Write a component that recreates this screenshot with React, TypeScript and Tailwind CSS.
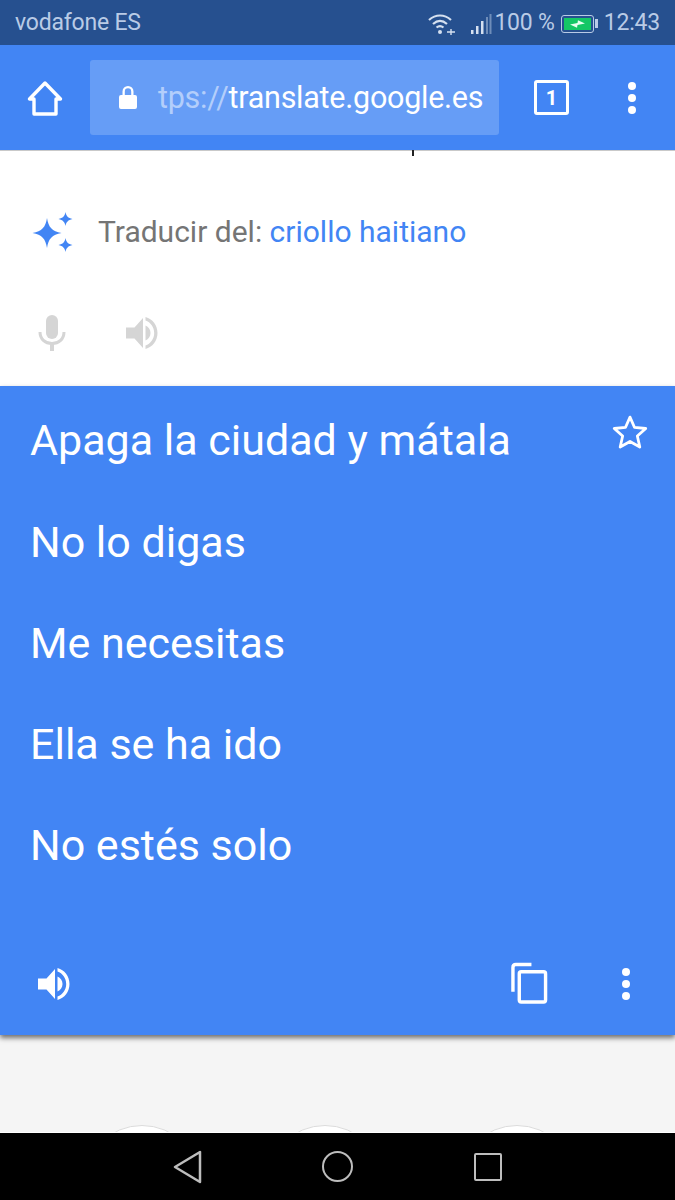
const Speaker = ({ className }: { className: string }) => (
  <svg viewBox="0 0 36 36" className={className} fill="currentColor">
    <path d="M1 12.500h8.500L18 3v30l-8.500-9.500H1z" />
    <path d="M20.500 10.500c3 1.300 5 4.200 5 7.500s-2 6.200-5 7.500z" />
    <path d="M20.500 2c7 1.800 12 8.300 12 16s-5 14.200-12 16v-3.500c5-1.700 8.700-6.700 8.700-12.500S25.500 7.200 20.500 5.500z" />
  </svg>
);

const Dots = () => (
  <div className="flex flex-col items-center gap-[4px]">
    <div className="w-[8px] h-[8px] rounded-full bg-white" />
    <div className="w-[8px] h-[8px] rounded-full bg-white" />
    <div className="w-[8px] h-[8px] rounded-full bg-white" />
  </div>
);

const StatusBar = () => (
  <div className="h-[45px] bg-[#26508f] flex items-center pl-[15px] pr-[15px] pt-[2px] text-[#b9cbe6] text-[23px] tracking-[-0.2px]">
    <span>vodafone ES</span>
    <div className="ml-auto flex items-center">
      <svg viewBox="0 0 30 24" className="w-[30px] h-[24px] mr-[13px]" fill="none" stroke="#d5e0f0" strokeWidth="2.200">
        <path d="M2 8c6.500-6 15.500-6 22 0" />
        <path d="M6 12c4.500-4 9.500-4 14 0" />
        <path d="M9.500 15.500c2.500-2 4.500-2 7 0" />
        <circle cx="13" cy="20" r="2" fill="#d5e0f0" stroke="none" />
        <path d="M20 20h8M24 17v6" strokeWidth="1.400" />
      </svg>
      <svg viewBox="0 0 22 24" className="w-[22px] h-[24px] mr-[2px]" fill="#d5e0f0">
        <rect x="1" y="18" width="2.500" height="4" />
        <rect x="6" y="14" width="2.500" height="8" />
        <rect x="11" y="9" width="2.500" height="13" />
        <rect x="16" y="5" width="2" height="17" fill="#6f8db9" />
        <rect x="19.500" y="2" width="2" height="20" fill="#6f8db9" />
      </svg>
      <span className="mr-[6px]">100 %</span>
      <div className="w-[33px] h-[18px] rounded-[3px] border border-[#b9cbe6] p-[2px] flex">
        <div className="flex-1 bg-[#14c765] flex items-center justify-center">
          <svg viewBox="0 0 16 8" className="w-[15px] h-[8px]" fill="#e8fff0">
            <path d="M0 4.500 8 3l.5-3L16 3.500 8 5l-.5 3z" />
          </svg>
        </div>
      </div>
      <div className="w-[3px] h-[9px] bg-[#b9cbe6] mr-[6px] ml-[1px]" />
      <span>12:43</span>
    </div>
  </div>
);

const Toolbar = () => (
  <div className="h-[106px] bg-[#4285f4] flex items-center border-b border-[#c9c9c9] relative">
    <div className="w-[90px] flex justify-center px-[1px]">
      <svg viewBox="0 0 36 36" className="w-[36px] h-[36px]" fill="none" stroke="white" strokeWidth="3.400" strokeLinejoin="round">
        <path d="M18 3 2.500 19H7v15h22V19h4.500z" />
      </svg>
    </div>
    <div className="w-[409px] h-[75px] rounded-[3px] bg-[#669df6] flex items-center pl-[28px] text-[30.500px] tracking-[-0.26px] text-white overflow-hidden">
      <svg viewBox="0 0 20 26" className="w-[20px] h-[26px] mr-[20px] shrink-0" fill="white">
        <path d="M3 10h1.500V6.500a5.500 5.500 0 0 1 11 0V10H17a2 2 0 0 1 2 2v10a2 2 0 0 1-2 2H3a2 2 0 0 1-2-2V12a2 2 0 0 1 2-2zm3.800 0h6.400V6.500a3.200 3.200 0 0 0-6.400 0z" />
      </svg>
      <span className="text-[#b3cefb]">tps://</span>
      <span>translate.google.es</span>
    </div>
    <div className="w-[35px] h-[35px] ml-[35px] mr-[59px] rounded-[3px] border-[3.500px] border-white flex items-center justify-center text-white text-[20px] font-bold">
      1
    </div>
    <Dots />
    <div className="absolute left-[412px] top-[105px] w-[2px] h-[6px] bg-[#222]" />
  </div>
);

const phrases = ["Apaga la ciudad y mátala", "No lo digas", "Me necesitas", "Ella se ha ido", "No estés solo"];

const App = () => {
  return (
    <div className="w-[675px] h-[1200px] flex flex-col bg-[#f5f5f5] overflow-hidden font-['Roboto',sans-serif]">
      <StatusBar />
      <Toolbar />
      <div className="h-[235px] bg-white pl-[31px] pt-[60px]">
        <div className="flex items-center h-[44px]">
          <svg viewBox="0 0 44 44" className="w-[44px] h-[44px] ml-[1px]" fill="#4285f4">
            <path d="M15 7c1.500 9.500 5 13 14.500 15C20 24 16.500 27.500 15 37c-1.500-9.500-5-13-14.500-15C10 20 13.500 16.500 15 7z" />
            <path d="M33.500 1c.8 4 2.500 6 7 7-4.500 1-6.200 3-7 7-.8-4-2.500-6-7-7 4.500-1 6.200-3 7-7z" />
            <path d="M33.500 27c.8 4 2.500 6 7 7-4.500 1-6.200 3-7 7-.8-4-2.500-6-7-7 4.500-1 6.200-3 7-7z" />
          </svg>
          <div className="ml-[22px] pb-[4px] text-[30px] text-[#757575]">
            Traducir del: <span className="text-[#4285f4]">criollo haitiano</span>
          </div>
        </div>
        <div className="flex items-center mt-[60px] text-[#d5d5d5]">
          <svg viewBox="0 0 28 36" className="w-[28px] h-[36px] ml-[7px]" fill="none" stroke="currentColor">
            <rect x="8" y="0" width="12" height="24" rx="6" fill="currentColor" stroke="none" />
            <path d="M2 17c0 7 5 11.500 12 11.500S26 24 26 17" strokeWidth="3" />
            <path d="M14 28v8" strokeWidth="4" />
          </svg>
          <Speaker className="w-[36px] h-[36px] ml-[59px]" />
        </div>
      </div>
      <div className="h-[649px] bg-[#4285f4] shadow-[0_3px_5px_rgba(0,0,0,0.55)] relative z-10 text-white flex flex-col">
        <svg viewBox="0 0 24 24" className="absolute top-[25px] right-[24px] w-[42px] h-[42px]" fill="none" stroke="white" strokeWidth="1.600">
          <path d="M12 3.500l2.600 5.900 6.400.6-4.800 4.300 1.400 6.300L12 17.400l-5.600 3.200 1.400-6.300L3 10l6.400-.6z" strokeLinejoin="round" />
        </svg>
        <div className="pl-[30px] pt-[4px] flex flex-col">
          {phrases.map((p) => (
            <div key={p} className="h-[101.200px] flex items-center text-[43px]">
              {p}
            </div>
          ))}
        </div>
        <div className="mt-auto h-[67px] flex items-start pl-[37px] pr-[45px]">
          <Speaker className="w-[36px] h-[36px] mt-[-2px]" />
          <svg viewBox="0 0 38 42" className="w-[37px] h-[42px] ml-auto mr-[74px] mt-[-6px]" fill="none" stroke="white" strokeWidth="3.500">
            <path d="M2 30V5c0-2 1-3 3-3h16" />
            <rect x="8.500" y="9.500" width="27" height="31" rx="2" />
          </svg>
          <Dots />
        </div>
      </div>
      <div className="h-[98px] relative overflow-hidden border-b border-white">
        <div className="absolute left-[83px] top-[90px] w-[118px] h-[118px] rounded-full bg-white border border-[#dcdcdc]" />
        <div className="absolute left-[266px] top-[90px] w-[118px] h-[118px] rounded-full bg-white border border-[#dcdcdc]" />
        <div className="absolute left-[458px] top-[90px] w-[118px] h-[118px] rounded-full bg-white border border-[#dcdcdc]" />
      </div>
      <div className="flex-1 bg-black flex items-center pl-[173px]">
        <svg viewBox="0 0 30 34" className="w-[30px] h-[34px]" fill="none" stroke="#bdbdbd" strokeWidth="2.500" strokeLinejoin="round">
          <path d="M27 2v30L2 17z" />
        </svg>
        <div className="w-[31px] h-[31px] rounded-full border-[2.500px] border-[#bdbdbd] ml-[119px]" />
        <div className="w-[28px] h-[28px] rounded-[2px] border-[2.500px] border-[#bdbdbd] ml-[121px]" />
      </div>
    </div>
  );
};

export default App;
